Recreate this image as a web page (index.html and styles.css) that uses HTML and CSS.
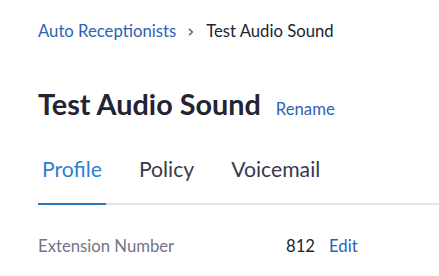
FILE: index.html
```html
<!DOCTYPE html>
<html lang="en">
  <head>
    <meta charset="UTF-8" />
    <title>Test Audio Sound</title>
    <link rel="stylesheet" href="styles.css">
  </head>
  <body>
    <div class="page">
      <nav class="breadcrumb">
        <a href="#" class="crumb-link">Auto Receptionists</a>
        <svg class="crumb-sep" width="6" height="8" viewBox="0 0 6 8">
          <path d="M1 0.8 L4.4 4 L1 7.2" fill="none" stroke="#3a62a6" stroke-width="1.4"/>
        </svg>
        <span class="crumb-current">Test Audio Sound</span>
      </nav>

      <div class="header">
        <h1 class="title">Test Audio Sound</h1>
        <a href="#" class="link">Rename</a>
      </div>

      <div class="tabs">
        <div class="tab active">Profile</div>
        <div class="tab">Policy</div>
        <div class="tab">Voicemail</div>
      </div>

      <div class="row">
        <div class="row-label">Extension Number</div>
        <div class="row-value">812</div>
        <a href="#" class="link">Edit</a>
      </div>
    </div>
  </body>
</html>
```

FILE: styles.css
```css
* {
  padding: 0;
  margin: 0;
  box-sizing: border-box;
  font-family: Lato, "Open Sans", sans-serif;
}

body {
  background: #fff;
  color: #232333;
}

.page {
  padding: 20px 0 0 38px;
}

a {
  text-decoration: none;
}

/* breadcrumb */
.breadcrumb {
  display: flex;
  align-items: center;
  font-size: 16.7px;
  line-height: 22px;
}

.crumb-link {
  color: #2d62b5;
}

.crumb-sep {
  margin: 1px 12px 0 12px;
}

.crumb-current {
  color: #232333;
}

/* titulo */
.header {
  display: flex;
  align-items: baseline;
  margin-top: 44px;
}

.title {
  font-size: 28.8px;
  font-weight: 700;
  line-height: 36px;
  color: #232333;
}

.link {
  color: #2d62b5;
  font-size: 16.7px;
  margin-left: 15px;
}

/* abas */
.tabs {
  display: flex;
  margin-top: 25px;
  border-bottom: 2px solid #e4e4e8;
}

.tab {
  font-size: 21.2px;
  line-height: 28px;
  color: #39394d;
  padding: 8px 4px 20px;
  margin-right: 29px;
  margin-bottom: -2px;
  border-bottom: 2px solid transparent;
}

.tab.active {
  color: #2d7fd6;
  border-bottom-color: #2b72c9;
}

/* linha de dados */
.row {
  display: flex;
  align-items: baseline;
  margin-top: 31px;
  font-size: 16.7px;
}

.row-label {
  color: #747487;
  width: 248px;
}

.row-value {
  color: #232333;
}

.row .link {
  margin-left: 14px;
}
```
